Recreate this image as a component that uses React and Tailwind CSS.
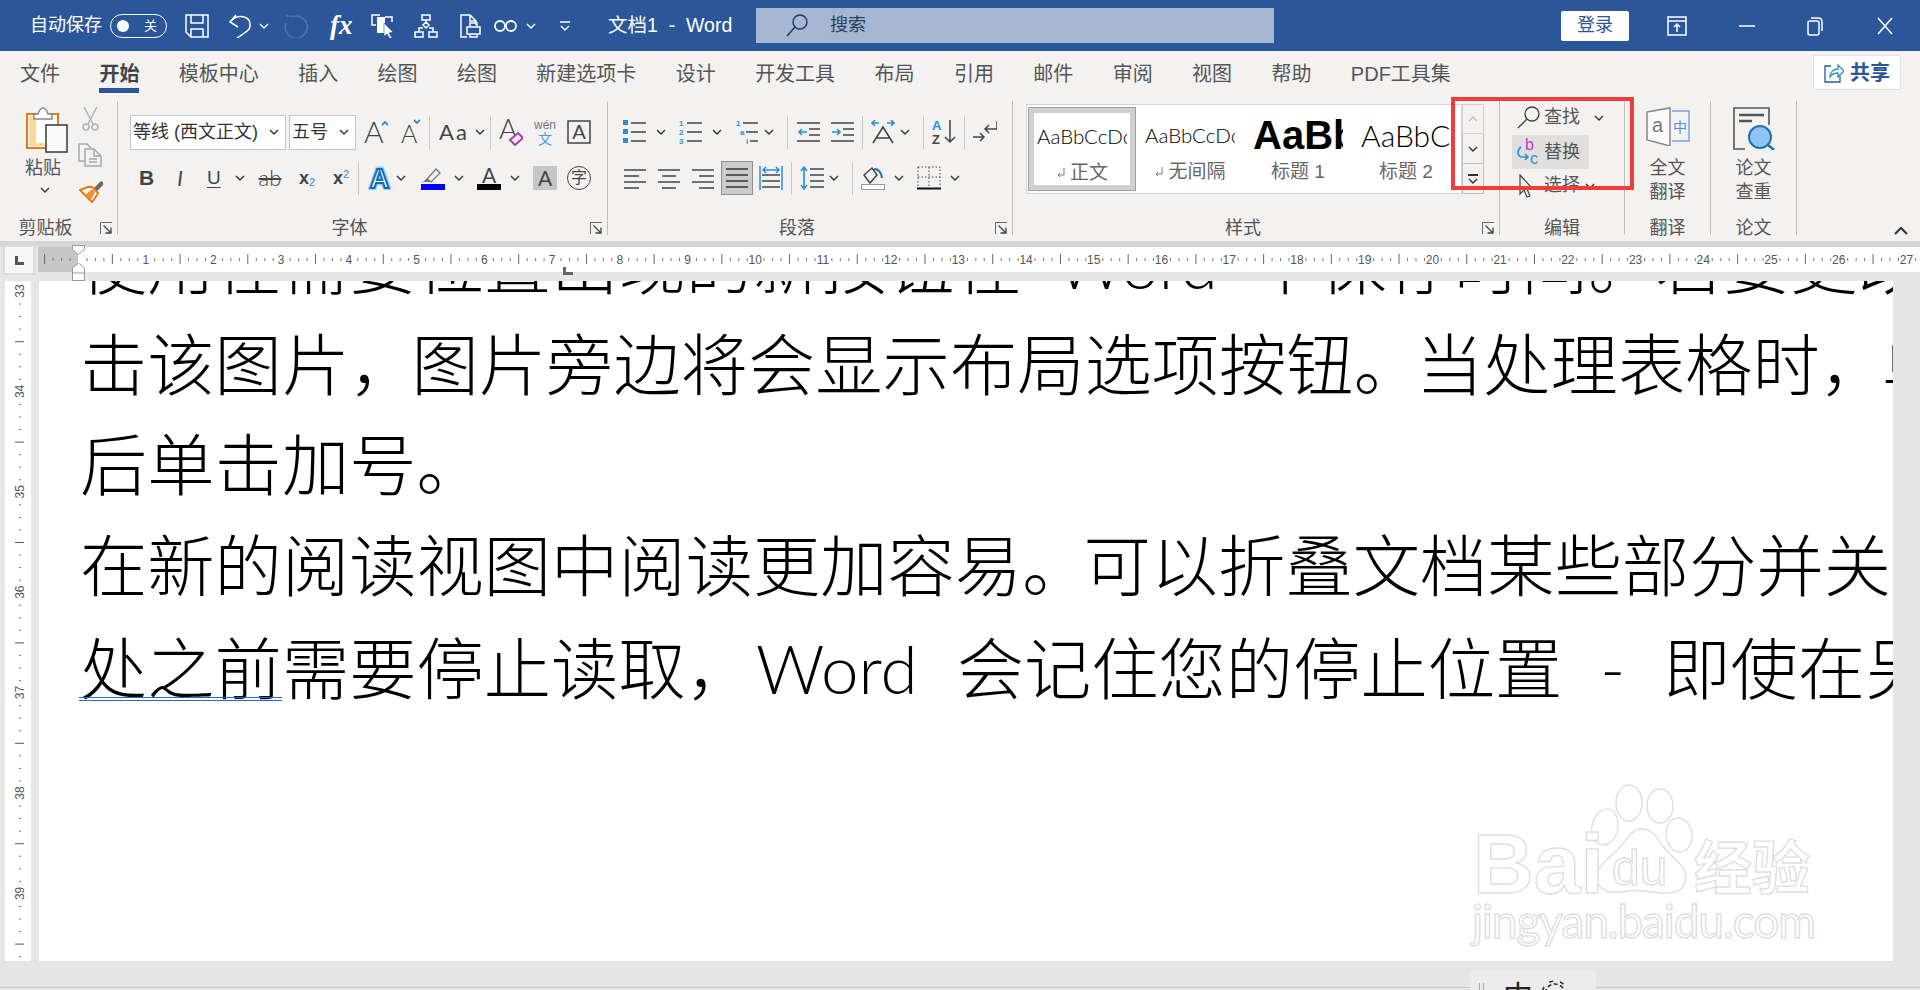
import React from 'react';

const tabs = ['文件', '开始', '模板中心', '插入', '绘图', '绘图', '新建选项卡', '设计', '开发工具', '布局', '引用', '邮件', '审阅', '视图', '帮助', 'PDF工具集'];
const LAT = 'Lato, "Liberation Sans", sans-serif';
const INK = '#444';
const BLUE = '#2b8fd6';

const Chev = ({ className = '', color = '#333' }) => (
    <svg width="10" height="6" viewBox="0 0 10 6" className={`shrink-0 ${className}`}>
        <path d="M1 1l4 4 4-4" fill="none" stroke={color} strokeWidth="1.4" />
    </svg>
);

const Sep = ({ className = '' }) => <div className={`w-px h-[33px] bg-[#c8c8c8] shrink-0 ${className}`} />;

const GroupLabel = ({ text, launcher }) => (
    <div className="flex items-center h-[24px] text-[18px] text-[#555]">
        <span className="flex-1 text-center">{text}</span>
        {launcher && (
            <div className="w-[26px] flex justify-end pr-[5px]">
                <svg width="12" height="12" viewBox="0 0 12 12">
                    <path d="M.5 12V.5H12" fill="none" stroke="#666" />
                    <path d="M3.5 3.5L11 11M11 5.5V11H5.5" fill="none" stroke="#444" strokeWidth="1.3" />
                </svg>
            </div>
        )}
    </div>
);

const Group = ({ width, label, launcher, children }) => (
    <div className={`${width} h-[134px] border-r border-[#c0c0c0] shrink-0`}>
        <div className="h-[115px]">{children}</div>
        <GroupLabel text={label} launcher={launcher} />
    </div>
);

const Lines = ({ rows, w = 22, h = 24, color = INK, sw = 1.5, extra }) => (
    <svg width={w} height={h} viewBox={`0 0 ${w} ${h}`} className="shrink-0">
        {rows.map(([x1, x2, y], i) => <path key={i} d={`M${x1} ${y}H${x2}`} stroke={color} strokeWidth={sw} />)}
        {extra}
    </svg>
);

const Ico = ({ w = 24, h = 24, className = '', children }) => (
    <svg width={w} height={h} viewBox={`0 0 ${w} ${h}`} className={`shrink-0 ${className}`}>{children}</svg>
);

const Row = ({ children }) => <div className="flex items-center h-[46px]">{children}</div>;

const Btn = ({ className = '', children }) => <span className={`shrink-0 text-center text-[#444] ${className}`}>{children}</span>;

const SelectBox = ({ width, text, className = '', pad }) => (
    <div className={`${width} ${className} h-[35px] bg-white border border-[#c6c6c6] flex items-center justify-between shrink-0 ${pad} pr-[6px] text-[18px] text-[#333]`}>
        <span className="whitespace-nowrap">{text}</span>
        <Chev />
    </div>
);

const StyleItem = ({ sample, label, arrow, selected, sampleClass }) => (
    <div className={`w-[108px] h-[84px] shrink-0 flex flex-col items-center ${selected ? 'border border-[#a0a0a0] bg-white' : ''}`}>
        <div className={`w-full h-full flex flex-col items-center ${selected ? 'border-[5px] border-[#d0d0d0]' : 'border-[5px] border-transparent'}`}>
            <div className="w-[90px] h-[46px] overflow-hidden flex items-center">
                <span className={`whitespace-nowrap ${sampleClass}`}>{sample}</span>
            </div>
            <div className="flex items-center gap-[4px] text-[#666] text-[19px] leading-[24px] mt-[2px]">
                {arrow && <Ico w={10} h={12}><path d="M8 1v7H2M4 6L2 8l2 2" fill="none" stroke="#777" /></Ico>}
                <span className="whitespace-nowrap">{label}</span>
            </div>
        </div>
    </div>
);

function HRuler() {
    const ticks = [];
    const unit = 67.72;
    for (let i = -5; i < 224; i++) {
        const x = 40 + i * (unit / 8);
        if (i % 8 === 0) {
            if (i > 0) ticks.push(<text key={i} x={x} y={16.5} fontSize="12" fill="#555" textAnchor="middle" fontFamily="Liberation Sans">{i / 8}</text>);
        } else if (i % 4 === 0) {
            ticks.push(<rect key={i} x={x} y={7} width="1" height="10" fill="#666" />);
        } else {
            ticks.push(<rect key={i} x={x} y={11} width="1" height="3" fill="#777" />);
        }
    }
    return <svg width="1882" height="25" viewBox="0 0 1882 25" className="absolute left-0 top-0">{ticks}</svg>;
}

function VRuler() {
    const ticks = [];
    const unit = 100.4;
    for (let i = 0; i < 56; i++) {
        const y = 10 + i * (unit / 8);
        if (i % 8 === 0) {
            ticks.push(<text key={i} x={0} y={0} transform={`translate(19 ${y}) rotate(-90)`} fontSize="12" fill="#555" textAnchor="middle" fontFamily="Liberation Sans">{33 + i / 8}</text>);
        } else if (i % 4 === 0) {
            ticks.push(<rect key={i} x={10} y={y} width="9" height="1" fill="#555" />);
        } else {
            ticks.push(<rect key={i} x={14} y={y} width="2" height="1" fill="#777" />);
        }
    }
    return <svg width="26" height="680" viewBox="0 0 26 680">{ticks}</svg>;
}

const Watermark = () => (
    <svg width="420" height="190" viewBox="1430 770 420 190" className="absolute left-[1391px] top-[489px]">
        <g fill="white" stroke="#dedede" strokeWidth="1.4">
            <ellipse cx="1629" cy="803" rx="13" ry="18" />
            <ellipse cx="1660" cy="806" rx="13" ry="17" />
            <ellipse cx="1605" cy="827" rx="13" ry="18" transform="rotate(12 1605 827)" />
            <ellipse cx="1679" cy="835" rx="13" ry="17" transform="rotate(-8 1679 835)" />
            <path d="M1642 829c-12 0-16 14-28 24-14 12-21 20-15 32 5 9 18 8 30 6 8-1 14-1 24 1 12 2 28 3 32-9 4-14-8-22-18-32-8-8-12-22-25-22z" />
            <text x="1473" y="893" fontSize="84" fontWeight="700" fontFamily="Liberation Sans">Bai</text>
            <text x="1612" y="885" fontSize="50" fontFamily="Liberation Sans">du</text>
            <text x="1694" y="889" fontSize="58" fontWeight="700" fontFamily="Noto Sans CJK SC">经验</text>
            <text x="1472" y="938" fontSize="46" fontFamily="Lato" textLength="344">jingyan.baidu.com</text>
        </g>
    </svg>
);

export default function App() {
    return (
        <div className="relative w-[1920px] h-[990px] overflow-hidden flex flex-col bg-[#e6e6e6] font-['Liberation_Sans','Noto_Sans_CJK_SC',sans-serif]">
            {/* title bar */}
            <div className="h-[51px] bg-[#2b579a] flex items-center text-white shrink-0">
                <span className="ml-[30px] w-[71px] text-[18px] whitespace-nowrap">自动保存</span>
                <div className="ml-[9px] w-[57px] h-[24px] border border-white rounded-full flex items-center justify-between pl-[6px] pr-[9px]">
                    <div className="w-[12px] h-[12px] rounded-full bg-white" />
                    <span className="text-[13px]">关</span>
                </div>
                <Ico className="ml-[18px]"><path d="M1 1h22v22H6l-5-5zM6 1v8h12V1M6 23v-8h12v8" fill="none" stroke="white" strokeWidth="1.5" /></Ico>
                <Ico w={22} className="ml-[20px]"><path d="M7 1L1 8l8 5M2 7C8 0 22 1 21 12c0 4-4 6-13 12" fill="none" stroke="white" strokeWidth="1.5" /></Ico>
                <Chev color="white" className="ml-[8px]" />
                <Ico w={25} className="ml-[15px]"><path d="M8 3a11 11 0 1 1-6 6M8 2H2" fill="none" stroke="#4f77ae" strokeWidth="1.5" /></Ico>
                <span className="ml-[21px] w-[21px] font-['Liberation_Serif',serif] italic font-bold text-[27px] leading-none whitespace-nowrap">fx</span>
                <Ico w={23} className="ml-[20px]">
                    <path d="M9 1H1v10h4" fill="none" stroke="white" strokeWidth="1.5" />
                    <path d="M6 3h8v16H6z" fill="white" />
                    <path d="M14 3h7v5" fill="none" stroke="white" strokeWidth="1.5" />
                    <path d="M13 9l9 9-4 1 3 5-2 1-3-5-3 2z" fill="white" stroke="#2b579a" strokeWidth=".6" />
                </Ico>
                <Ico className="ml-[20px]">
                    <g fill="none" stroke="white" strokeWidth="1.5">
                        <path d="M8 1h8v5H8zM1 18h8v5H1zM15 18h8v5h-8zM12 6v2M12 8l3 3-3 3-3-3zM5 18v-4h4M19 18v-4h-4" />
                    </g>
                </Ico>
                <Ico w={21} className="ml-[22px]">
                    <g fill="none" stroke="white" strokeWidth="1.5">
                        <path d="M7 23H1V1h9l6 6v4M10 1v6h6M7 13h13v7H7zM10 13V9h7v4M10 20v3h7v-3" />
                    </g>
                </Ico>
                <Ico w={23} className="ml-[13px]">
                    <g fill="none" stroke="white" strokeWidth="1.8"><circle cx="6" cy="12" r="5" /><circle cx="17" cy="12" r="5" /></g>
                </Ico>
                <Chev color="white" className="ml-[9px]" />
                <Ico w={10} h={12} className="ml-[24px]"><path d="M0 2h10M1 6l4 4 4-4" fill="none" stroke="white" strokeWidth="1.4" /></Ico>
                <span className="ml-[38px] w-[148px] text-[19.5px] whitespace-pre">文档1  -  Word</span>
                <div className="w-[518px] h-[35px] bg-[#a5b7d1] flex items-center text-[#2a3f63] text-[18px] shrink-0">
                    <Ico w={22} className="ml-[30px]">
                        <g fill="none" stroke="#22375c" strokeWidth="1.4"><circle cx="14" cy="8" r="7" /><path d="M9 13l-8 9" /></g>
                    </Ico>
                    <span className="ml-[22px]">搜索</span>
                </div>
                <div className="ml-[287px] w-[68px] h-[30px] bg-white rounded-[2px] text-[#2b579a] text-[18px] flex items-center justify-center shrink-0">登录</div>
                <Ico w={20} className="ml-[38px]">
                    <g fill="none" stroke="white" strokeWidth="1.5"><path d="M1 3h18v18H1zM1 7h18" /><path d="M10 18v-8M7 13l3-3 3 3" /></g>
                </Ico>
                <Ico w={16} h={16} className="ml-[52px]"><path d="M0 8h16" stroke="white" strokeWidth="1.5" /></Ico>
                <Ico w={16} h={20} className="ml-[52px]">
                    <g fill="none" stroke="white" strokeWidth="1.5"><rect x="1" y="5" width="11" height="14" rx="2" /><path d="M4 2h7c3 0 4 1 4 4v9" /></g>
                </Ico>
                <Ico w={16} h={18} className="ml-[54px]"><path d="M1 1l14 16M15 1L1 17" stroke="white" strokeWidth="1.5" /></Ico>
            </div>

            {/* tabs */}
            <div className="h-[46px] bg-[#f3f2f1] flex items-start pl-[20px] gap-[39.4px] shrink-0 text-[20px] text-[#555]">
                {tabs.map((t, i) => (
                    <div key={i} className={`h-[42px] pt-[8px] flex items-center border-b-[5px] whitespace-nowrap ${i === 1 ? 'border-[#2b579a] font-bold text-[#444]' : 'border-transparent'}`}>{t}</div>
                ))}
                <div className="ml-auto mr-[19px] mt-[4px] w-[88px] h-[35px] bg-white border border-[#e1e1e1] rounded-[2px] flex items-center justify-center gap-[6px] text-[#2b579a] font-bold">
                    <Ico w={20} h={22}>
                        <path d="M7 4H1v16h15v-6" fill="none" stroke="#2b579a" strokeWidth="1.3" />
                        <path d="M6 15c0-5 4-8 8-8V3l6 6-6 6v-4c-3 0-6 1-8 4z" fill="none" stroke="#2b8fd6" strokeWidth="1.3" />
                    </Ico>
                    <span>共享</span>
                </div>
            </div>

            {/* ribbon */}
            <div className="h-[144px] bg-[#f3f2f1] pt-[4px] flex shrink-0">
                <Group width="w-[118px]" label="剪贴板" launcher>
                    <div className="flex">
                        <div className="w-[80px] pl-[26px] pt-[6px] flex flex-col shrink-0">
                            <Ico w={42} h={46}>
                                <rect x="1" y="7" width="31" height="34" fill="#fff" stroke="#e3791b" strokeWidth="2" />
                                <rect x="3" y="9" width="7" height="30" fill="#fbd99a" />
                                <rect x="3" y="36" width="27" height="3" fill="#fbd99a" />
                                <path d="M8 12V7h4c1-3 2-6 5-6s4 3 5 6h4v5z" fill="white" stroke="#888" strokeWidth="1.5" />
                                <rect x="20" y="18" width="21" height="27" fill="#fafafa" stroke="#444" strokeWidth="1.6" />
                            </Ico>
                            <span className="text-[18px] text-[#555] leading-[24px] mt-[3px] -ml-[1px] whitespace-nowrap">粘贴</span>
                            <Chev className="ml-[14px] mt-[7px]" />
                        </div>
                        <div className="flex flex-col pt-[6px]">
                            <Ico w={17} h={24} className="ml-[2px]">
                                <g fill="none" stroke="#b2b2b2" strokeWidth="1.5">
                                    <path d="M2 0l9 17M15 0L6 17" /><circle cx="4" cy="20" r="3" /><circle cx="13" cy="20" r="3" />
                                </g>
                            </Ico>
                            <Ico w={24} h={24} className="-ml-[2px] mt-[12px]">
                                <g fill="none" stroke="#a8a8a8" strokeWidth="1.5">
                                    <path d="M7 18H1V1h8l4 4M7 6h9l7 7v10H7zM16 6v7h7M11 16h8M11 19h8" />
                                </g>
                            </Ico>
                            <Ico w={24} h={24} className="-ml-[1px] mt-[12px]">
                                <path d="M14 10L21 3a2 2 0 0 1 3 3l-7 7z" fill="#666" />
                                <path d="M13 8l6 6-1 2-5 7L1 11l8-3z" fill="#fff" stroke="#e3791b" strokeWidth="2" />
                                <path d="M6 16l7-6 3 3-4 8z" fill="#f0902a" />
                            </Ico>
                        </div>
                    </div>
                </Group>

                <Group width="w-[490px]" label="字体" launcher>
                    <div className="pt-[8px]">
                        <Row>
                            <SelectBox width="w-[156px]" text="等线 (西文正文)" className="ml-[12px]" pad="pl-[2px]" />
                            <SelectBox width="w-[67px]" text="五号" className="ml-[3px]" pad="pl-[2px]" />
                            <Ico className="ml-[8px]" h={28}>
                                <text x="0" y="25" fontSize="30" fontFamily={LAT} fontWeight="300" fill={INK}>A</text>
                                <path d="M18 7l3-3 3 3" fill="none" stroke={BLUE} strokeWidth="1.8" />
                            </Ico>
                            <Ico w={20} h={28} className="ml-[13px]">
                                <text x="0" y="25" fontSize="25" fontFamily={LAT} fontWeight="300" fill={INK}>A</text>
                                <path d="M13 2l3 3 3-3" fill="none" stroke={BLUE} strokeWidth="1.8" />
                            </Ico>
                            <Sep className="ml-[8px]" />
                            <Ico w={33} h={28} className="ml-[9px]">
                                <text x="0" y="22" fontSize="22" fontFamily={LAT} fill={INK} letterSpacing="2">Aa</text>
                            </Ico>
                            <Chev className="ml-[3px]" />
                            <Sep className="ml-[5px]" />
                            <Ico className="ml-[8px]" h={28}>
                                <text x="0" y="21" fontSize="28" fontFamily={LAT} fontWeight="300" fill={INK}>A</text>
                                <path d="M11 22l8-7 5 5-8 7z" fill="#f8eef8" stroke="#a33eb0" strokeWidth="2" />
                            </Ico>
                            <Ico w={22} h={28} className="ml-[11px]">
                                <text x="11" y="11" fontSize="12" fontFamily="Liberation Sans" fill="#777" textAnchor="middle">wén</text>
                                <text x="11" y="26" fontSize="14" fontFamily="Noto Sans CJK SC" fill="#3aa0e0" textAnchor="middle">文</text>
                            </Ico>
                            <Ico className="ml-[11px]">
                                <rect x="1" y="1" width="22" height="22" fill="none" stroke="#444" strokeWidth="1.5" />
                                <text x="12" y="19" fontSize="20" fontFamily={LAT} fill={INK} textAnchor="middle">A</text>
                            </Ico>
                        </Row>
                        <Row>
                            <Btn className="ml-[21px] w-[13px] font-bold text-[21px]">B</Btn>
                            <Btn className="ml-[24px] w-[8px] italic text-[21px] font-['Lato',sans-serif]">I</Btn>
                            <Btn className="ml-[23px] w-[13px] underline underline-offset-[3px] text-[19px]">U</Btn>
                            <Chev className="ml-[15px]" />
                            <Btn className="ml-[13px] w-[24px] line-through text-[22px] leading-none font-light font-['Lato',sans-serif]">ab</Btn>
                            <Btn className="ml-[17px] w-[16px] font-bold text-[18px] whitespace-nowrap">x<sub className="text-[11px] font-normal text-[#2b8fd6]">2</sub></Btn>
                            <Btn className="ml-[18px] w-[16px] font-bold text-[18px] whitespace-nowrap">x<sup className="text-[11px] font-normal text-[#2b8fd6]">2</sup></Btn>
                            <Sep className="ml-[9px]" />
                            <Ico w={23} h={24} className="ml-[9px]">
                                <text x="11.5" y="22" fontSize="27" fontWeight="700" fontFamily="Liberation Sans" fill="#fff" stroke="#9bd0f2" strokeWidth="4.5" textAnchor="middle">A</text>
                                <text x="11.5" y="22" fontSize="27" fontWeight="700" fontFamily="Liberation Sans" fill="#fff" stroke="#0f6cbd" strokeWidth="2" textAnchor="middle">A</text>
                            </Ico>
                            <Chev className="ml-[5px]" />
                            <Ico className="ml-[15px]">
                                <path d="M6 13L15 3l4 4-9 9z" fill="none" stroke="#777" strokeWidth="1.3" />
                                <path d="M1 17l5-5 4 4H1z" fill="#777" />
                                <rect y="18" width="24" height="6" fill="#0000ff" />
                            </Ico>
                            <Chev className="ml-[9px]" />
                            <Ico className="ml-[13px]">
                                <text x="12" y="17" fontSize="21" fontFamily={LAT} fill={INK} textAnchor="middle">A</text>
                                <rect y="18" width="24" height="6" fill="#000" />
                            </Ico>
                            <Chev className="ml-[9px]" />
                            <div className="ml-[13px] w-[24px] h-[24px] bg-[#c6c6c6] text-center text-[#444] text-[21px] leading-[24px] font-['Lato',sans-serif] shrink-0">A</div>
                            <div className="ml-[10px] w-[24px] h-[24px] rounded-full border border-[#444] flex items-center justify-center text-[16px] text-[#444] shrink-0">字</div>
                        </Row>
                    </div>
                </Group>

                <Group width="w-[405px]" label="段落" launcher>
                    <div className="pt-[8px]">
                        <Row>
                            <span className="ml-[15px]" />
                            <Lines w={23} rows={[[8, 23, 3], [8, 23, 12], [8, 23, 21]]} extra={<g fill={BLUE}><rect y="0" width="5" height="5" /><rect y="9" width="5" height="5" /><rect y="18" width="5" height="5" /></g>} />
                            <Chev className="ml-[10px]" />
                            <span className="ml-[12px]" />
                            <Lines w={24} rows={[[9, 24, 3], [9, 24, 12], [9, 24, 21]]} extra={<g fill={BLUE} fontSize="8" fontFamily="Liberation Sans" fontWeight="700"><text x="1" y="6">1</text><text x="1" y="15">2</text><text x="1" y="24">3</text></g>} />
                            <Chev className="ml-[10px]" />
                            <span className="ml-[13px]" />
                            <Lines w={23} rows={[[8, 23, 3], [11, 23, 12], [15, 23, 21]]} extra={<g fill={BLUE} fontSize="8" fontFamily="Liberation Sans" fontWeight="700"><text x="1" y="6">1</text><text x="5" y="15">a</text><text x="11" y="24">i</text></g>} />
                            <Chev className="ml-[6px]" />
                            <Sep className="ml-[13px]" />
                            <span className="ml-[9px]" />
                            <Lines w={23} rows={[[0, 23, 3], [12, 23, 9], [12, 23, 15], [0, 23, 21]]} extra={<path d="M10 12H2M5 9l-3 3 3 3" fill="none" stroke={BLUE} strokeWidth="1.6" />} />
                            <span className="ml-[11px]" />
                            <Lines w={23} rows={[[0, 23, 3], [12, 23, 9], [12, 23, 15], [0, 23, 21]]} extra={<path d="M1 12h8M6 9l3 3-3 3" fill="none" stroke={BLUE} strokeWidth="1.6" />} />
                            <Sep className="ml-[8px]" />
                            <Ico className="ml-[8px]">
                                <path d="M8 3H1M4 0L1 3l3 3M16 3h7M20 0l3 3-3 3" fill="none" stroke={BLUE} strokeWidth="1.6" />
                                <path d="M2 23L12 7l10 16M6 18h12" fill="none" stroke={INK} strokeWidth="1.6" />
                            </Ico>
                            <Chev className="ml-[5px]" />
                            <Sep className="ml-[13px]" />
                            <Ico h={26} className="ml-[8px]">
                                <text x="0" y="11" fontSize="13" fontWeight="700" fontFamily="Liberation Sans" fill={BLUE}>A</text>
                                <text x="0" y="25" fontSize="13" fontWeight="700" fontFamily="Liberation Sans" fill={INK}>Z</text>
                                <path d="M18 1v22M13 18l5 5 5-5" fill="none" stroke={INK} strokeWidth="1.5" />
                            </Ico>
                            <Sep className="ml-[8px]" />
                            <Ico className="ml-[8px]">
                                <path d="M0 17h11M7 13l4 4-4 4" fill="none" stroke={INK} strokeWidth="1.5" />
                                <path d="M24 1v8H12M16 5l-4 4 4 4" fill="none" stroke={INK} strokeWidth="1.5" />
                            </Ico>
                        </Row>
                        <Row>
                            <span className="ml-[16px]" />
                            <Lines rows={[[0, 22, 4], [0, 15, 10], [0, 22, 16], [0, 15, 22]]} />
                            <span className="ml-[12px]" />
                            <Lines rows={[[0, 22, 4], [4, 18, 10], [0, 22, 16], [4, 18, 22]]} />
                            <span className="ml-[12px]" />
                            <Lines rows={[[0, 22, 4], [7, 22, 10], [0, 22, 16], [7, 22, 22]]} />
                            <div className="ml-[7px] w-[32px] h-[34px] bg-[#cbcbcb] border border-[#8f8f8f] flex items-center justify-center shrink-0">
                                <Lines rows={[[0, 22, 3], [0, 22, 9], [0, 22, 15], [0, 22, 21]]} color="#333" />
                            </div>
                            <span className="ml-[6px]" />
                            <Lines rows={[[3, 21, 9], [3, 21, 15], [3, 21, 21]]} extra={<path d="M1 0v24M23 0v24M4 4h16M7 1L4 4l3 3M17 1l3 3-3 3" fill="none" stroke={BLUE} strokeWidth="1.5" />} w={24} />
                            <Sep className="ml-[8px]" />
                            <span className="ml-[8px]" />
                            <Lines w={24} rows={[[10, 24, 3], [10, 24, 9], [10, 24, 15], [10, 24, 21]]} extra={<path d="M4 1v22M1 5l3-4 3 4M1 19l3 4 3-4" fill="none" stroke={BLUE} strokeWidth="1.6" />} />
                            <Chev className="ml-[5px]" />
                            <Sep className="ml-[13px]" />
                            <Ico className="ml-[8px]">
                                <path d="M3 9l8-7 5 7-7 8z" fill="none" stroke={INK} strokeWidth="1.5" />
                                <path d="M13 3c4 0 7 2 8 9" fill="none" stroke="#1f6fb0" strokeWidth="2" />
                                <rect x=".5" y="18.5" width="23" height="5" fill="#fff" stroke="#999" />
                            </Ico>
                            <Chev className="ml-[9px]" />
                            <Ico className="ml-[13px]">
                                <path d="M1 1h22v20M1 1v20M12 1v20M1 11h22" fill="none" stroke="#444" strokeDasharray="1.5 2" />
                                <path d="M0 22.5h24" stroke="#111" strokeWidth="2" />
                            </Ico>
                            <Chev className="ml-[9px]" />
                        </Row>
                    </div>
                </Group>

                <Group width="w-[487px]" label="样式" launcher>
                    <div className="flex pl-[13px] pt-[3px]">
                        <div className="w-[436px] h-[90px] bg-white border border-[#d4d4d4] flex items-center pl-[1px] overflow-hidden shrink-0">
                            <StyleItem selected sample="AaBbCcDc" label="正文" arrow sampleClass="text-[20.5px] text-black font-light font-['Lato',sans-serif]" />
                            <StyleItem sample="AaBbCcDc" label="无间隔" arrow sampleClass="text-[20.5px] text-black font-light font-['Lato',sans-serif]" />
                            <StyleItem sample="AaBb" label="标题 1" sampleClass="text-[40px] font-bold text-black" />
                            <StyleItem sample="AaBbC" label="标题 2" sampleClass="text-[30px] text-black font-light font-['Lato',sans-serif]" />
                        </div>
                        <div className="flex flex-col w-[22px] h-[90px] shrink-0">
                            <div className="h-[30px] border border-[#d0d0d0] flex items-center justify-center"><Chev color="#bbb" className="rotate-180" /></div>
                            <div className="h-[30px] border border-t-0 border-[#c0c0c0] flex items-center justify-center"><Chev /></div>
                            <div className="h-[30px] border border-t-0 border-[#c0c0c0] flex flex-col items-center justify-center gap-[2px]">
                                <div className="w-[10px] h-[2px] bg-[#333]" />
                                <Chev />
                            </div>
                        </div>
                    </div>
                </Group>

                <Group width="w-[125px]" label="编辑">
                    <div className="flex flex-col text-[18px] text-[#555] pt-[1px]">
                        <div className="flex items-center h-[31px] pl-[17px]">
                            <Ico w={23} h={23}>
                                <g fill="none" stroke="#444" strokeWidth="1.4"><circle cx="15" cy="8" r="7" /><path d="M10 13l-9 9" /></g>
                            </Ico>
                            <span className="ml-[4px]">查找</span>
                            <Chev className="ml-[14px]" />
                        </div>
                        <div className="flex items-center h-[34px] w-[77px] ml-[12px] mt-[2px] pl-[4px] bg-[#e1dfdd]">
                            <Ico w={22} h={28}>
                                <text x="9" y="12" fontSize="16" fontFamily="Liberation Sans" fill="#b146c2">b</text>
                                <text x="14" y="26" fontSize="16" fontFamily="Liberation Sans" fill={BLUE}>c</text>
                                <path d="M5 9c-4 3-4 8 0 10h7M9 16l3 3-3 3" fill="none" stroke={BLUE} strokeWidth="1.6" />
                            </Ico>
                            <span className="ml-[6px]">替换</span>
                        </div>
                        <div className="flex items-center h-[31px] pl-[19px] mt-[1px]">
                            <Ico w={14} h={24}>
                                <path d="M1 1l12 13-5 1 3 7-3 1-3-7-4 4z" fill="#f3f2f1" stroke="#444" strokeWidth="1.2" />
                            </Ico>
                            <span className="ml-[11px]">选择</span>
                            <Chev className="ml-[5px]" />
                        </div>
                    </div>
                </Group>

                <Group width="w-[86px]" label="翻译">
                    <div className="flex flex-col items-center pt-[6px] text-[18px] text-[#555] leading-[24px]">
                        <Ico w={44} h={39} className="mb-[10px]">
                            <path d="M1 5l23-4v38L1 33z" fill="#fafafa" stroke="#888" strokeWidth="1.5" />
                            <text x="6" y="25" fontSize="20" fontFamily="Liberation Sans" fill="#777">a</text>
                            <path d="M26 4h17v30H26" fill="none" stroke="#7ba4e6" strokeWidth="1.5" />
                            <text x="34" y="25" fontSize="14" fontFamily="Noto Sans CJK SC" fill="#5a8fe0" textAnchor="middle">中</text>
                        </Ico>
                        <span>全文</span>
                        <span>翻译</span>
                    </div>
                </Group>

                <Group width="w-[86px]" label="论文">
                    <div className="flex flex-col items-center pt-[6px] text-[18px] text-[#555] leading-[24px]">
                        <Ico w={42} h={43} className="mb-[6px]">
                            <path d="M12 42H1V1h35v17" fill="none" stroke="#555" strokeWidth="1.6" />
                            <path d="M6 8h25M6 14h13" stroke="#555" strokeWidth="2.4" />
                            <circle cx="27" cy="30" r="11" fill="#90c4f4" stroke="#1f73a8" strokeWidth="2" />
                            <path d="M35 38l6 5" stroke="#1f73a8" strokeWidth="2.6" />
                        </Ico>
                        <span>论文</span>
                        <span>查重</span>
                    </div>
                </Group>

                <div className="flex-1 flex justify-end items-end pr-[14px] pb-[7px]">
                    <Chev className="rotate-180 scale-150" color="#333" />
                </div>
            </div>

            <div className="h-[6px] bg-[#d6d6d6] shrink-0" />

            {/* horizontal ruler */}
            <div className="h-[34px] flex shrink-0">
                <div className="ml-[3px] -mt-[2px] w-[32px] h-[30px] bg-[#f8f8f8] border-2 border-[#dcdcdc] flex items-center justify-center shrink-0">
                    <div className="w-[9px] h-[9px] border-l-[3px] border-b-[3px] border-[#555]" />
                </div>
                <div className="ml-[3px] flex-1 h-[25px] bg-white relative">
                    <div className="absolute left-0 top-0 w-[40px] h-[25px] bg-[#c6c6c6]" />
                    <HRuler />
                    <Ico w={13} h={10} className="absolute left-[34px] -top-[2px]"><path d="M.5.5h12v4l-6 5-6-5z" fill="#fff" stroke="#999" /></Ico>
                    <Ico w={13} h={18} className="absolute left-[34px] top-[16px]"><path d="M.5 17.5h12V5l-6-5-6 5zM.5 10h12" fill="#fff" stroke="#999" /></Ico>
                    <div className="absolute left-[525px] top-[20px] w-[10px] h-[8px] border-l-[3px] border-b-[3px] border-[#666]" />
                </div>
            </div>

            {/* document */}
            <div className="h-[680px] flex shrink-0">
                <div className="w-[39px] pl-[5px] shrink-0">
                    <div className="w-[26px] h-full bg-white"><VRuler /></div>
                </div>
                <div className="relative w-[1854px] h-[680px] bg-white overflow-hidden shrink-0">
                    <div className="-mt-[68px] pl-[41px] text-[67.3px] leading-[100.5px] text-black whitespace-nowrap font-light">
                        <div>使用在需要位置出现的新按钮在<span className="mx-[34px] font-['Lato',sans-serif]">Word</span>中保存时间。若要更改图片适应文档的方式</div>
                        <div>击该图片<span className="-mr-[5px]">，</span>图片旁边将会显示布局选项按钮<span className="-mr-[5px]">。</span>当处理表格时<span className="-mr-[5px]">，</span>单击要添加行或列的位置，然</div>
                        <div>后单击加号。</div>
                        <div>在新的阅读视图中阅读更加容易<span className="-mr-[6px]">。</span>可以折叠文档某些部分并关注所需文本。如果在达到结尾</div>
                        <div>处之前需要停止读取，<span className="ml-[3px] font-['Lato',sans-serif]">Word</span><span className="ml-[39px]">会记住您的停止位置</span><span className="mx-[38px] font-['Lato',sans-serif]">-</span>即使在另一个设备上。</div>
                    </div>
                    <div className="absolute left-[40px] top-[416px] w-[203px] h-[4px] border-y border-[#2a66d8]" />
                    <Watermark />
                </div>
            </div>

            {/* status strip */}
            <div className="flex-1 relative">
                <div className="mt-[26px] border-t border-[#c4c4c4]" />
                <div className="absolute left-[1470px] top-[10px] w-[126px] h-[19px] bg-[#ececec] flex items-start overflow-hidden">
                    <div className="ml-[9px] mt-[12px] w-[5px] h-[8px] border-x border-[#aaa] shrink-0" />
                    <span className="ml-[19px] mt-[8px] text-[30px] leading-[36px] text-[#222]">中</span>
                    <Ico w={30} h={30} className="ml-[7px] mt-[8px]">
                        <circle cx="15" cy="15" r="10" fill="none" stroke="#222" strokeWidth="1.5" strokeDasharray="4 2.5" />
                        <circle cx="15" cy="15" r="13" fill="none" stroke="#222" strokeWidth="1.5" strokeDasharray="4 7" />
                    </Ico>
                </div>
            </div>

            {/* red highlight box */}
            <div className="absolute left-[1451px] top-[97px] w-[183px] h-[93px] border-[4px] border-[#f23c3c]" />
        </div>
    );
}
